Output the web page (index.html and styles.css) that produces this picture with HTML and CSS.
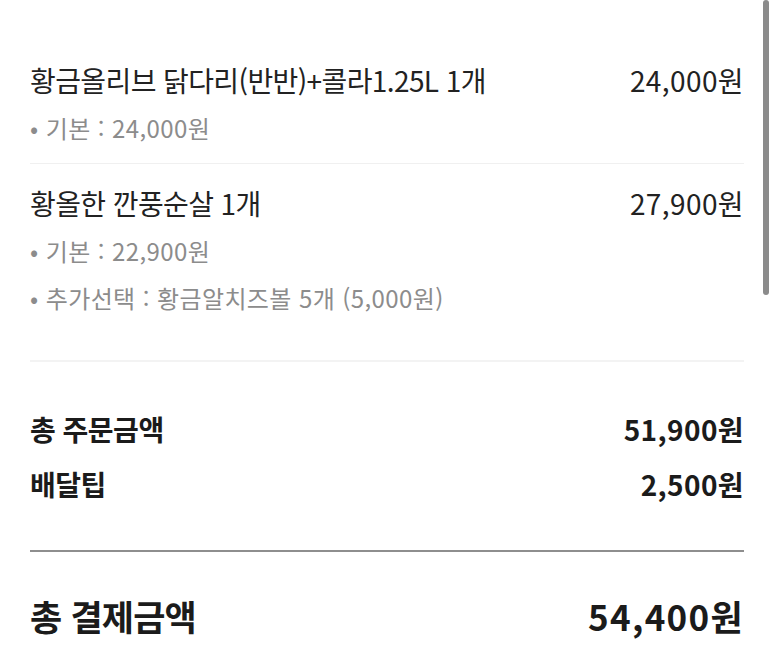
FILE: index.html
```html
<!DOCTYPE html>
<html lang="ko">
<head>
<meta charset="utf-8">
<link rel="stylesheet" href="styles.css">
</head>
<body>
<div class="page">
  <section class="items">
    <div class="item">
      <div class="row title">
        <span class="name">황금올리브 닭다리(반반)+콜라1.25L 1개</span>
        <span class="price">24,000원</span>
      </div>
      <div class="sub">• 기본 : 24,000원</div>
    </div>
    <div class="item">
      <div class="row title">
        <span class="name">황올한 깐풍순살 1개</span>
        <span class="price">27,900원</span>
      </div>
      <div class="sub">• 기본 : 22,900원</div>
      <div class="sub">• 추가선택 : 황금알치즈볼 5개 (5,000원)</div>
    </div>
  </section>
  <section class="summary">
    <div class="row sum"><span class="label">총 주문금액</span><span class="price">51,900원</span></div>
    <div class="row sum"><span class="label">배달팁</span><span class="price">2,500원</span></div>
  </section>
  <section class="total">
    <div class="row grand"><span class="label">총 결제금액</span><span class="price">54,400원</span></div>
  </section>
  <div class="scrollbar"></div>
</div>
</body>
</html>
```

FILE: styles.css
```css
html, body {
  margin: 0;
  padding: 0;
  background: #ffffff;
}
body {
  font-family: "Noto Sans CJK KR", "Noto Sans", sans-serif;
  color: #1f1f1f;
  overflow: hidden;
}
.page {
  position: relative;
  width: 773px;
  height: 658px;
  padding: 0 29px 0 30px;
  box-sizing: border-box;
}
.row {
  display: flex;
  justify-content: space-between;
  align-items: center;
}
.items {
  padding: 41px 0 27px;
  border-bottom: 2px solid #f3f3f3;
}
.item {
  padding: 19px 0 12px;
}
.item + .item {
  border-top: 1px solid #f0f0f0;
}
.title {
  font-size: 28px;
  line-height: 40px;
  margin-bottom: 4px;
  color: #222222;
}
.title .name {
  letter-spacing: -0.6px;
}
.title .price {
  letter-spacing: 0.4px;
}
.sub {
  font-size: 24px;
  line-height: 47px;
  color: #8c8c8c;
  letter-spacing: 0.4px;
}
.summary {
  padding: 47px 0 46px;
  border-bottom: 2px solid #8e8e8e;
  display: flex;
  flex-direction: column;
  gap: 15px;
}
.sum {
  font-size: 28px;
  line-height: 40px;
  font-weight: 700;
  color: #1b1b1b;
}
.sum .label {
  letter-spacing: -0.5px;
}
.sum .price {
  letter-spacing: 0.4px;
}
.total {
  padding-top: 42px;
}
.grand {
  font-size: 35px;
  line-height: 44px;
  font-weight: 700;
  color: #1b1b1b;
}
.grand .label {
  letter-spacing: -0.8px;
}
.grand .price {
  letter-spacing: 1.3px;
}
.scrollbar {
  position: absolute;
  top: 0;
  left: 763px;
  width: 6px;
  height: 295px;
  border-radius: 3px;
  background: #8b8b8b;
}
```
